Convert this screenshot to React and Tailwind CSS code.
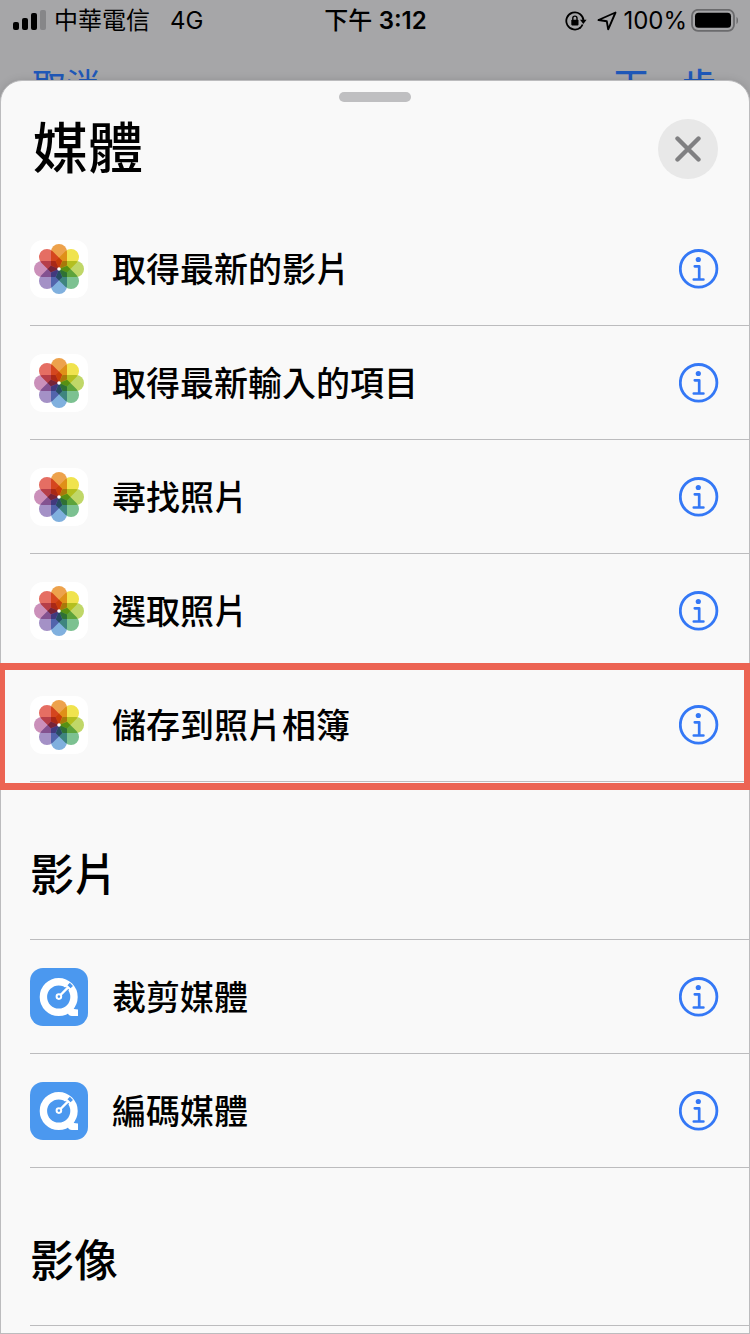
// ActionPicker.jsx
const photoActions = [
  { id: 1, label: "取得最新的影片" },
  { id: 2, label: "取得最新輸入的項目" },
  { id: 3, label: "尋找照片" },
  { id: 4, label: "選取照片" },
  { id: 5, label: "儲存到照片相簿", highlighted: true },
];

const videoActions = [
  { id: 6, label: "裁剪媒體" },
  { id: 7, label: "編碼媒體" },
];

const petals = [
  { angle: 0, color: "#eda24c" },
  { angle: 45, color: "#f0e34e" },
  { angle: 90, color: "#c0d768" },
  { angle: 135, color: "#7cc191" },
  { angle: 180, color: "#80b0de" },
  { angle: 225, color: "#a491c6" },
  { angle: 270, color: "#cb90ba" },
  { angle: 315, color: "#e56e63" },
];

function PhotosIcon() {
  return (
    <svg viewBox="0 0 58 58" className="size-[58px] shrink-0 isolate" aria-hidden="true">
      <rect width="58" height="58" rx="13" fill="#fff" />
      {petals.map((p) => (
        <path
          key={p.angle}
          d="M21 25.500V12a8 8 0 0 1 16 0V25.500L29 29z"
          fill={p.color}
          transform={`rotate(${p.angle} 29 29)`}
          className="mix-blend-multiply"
        />
      ))}
      <circle cx="29" cy="29" r="1.800" fill="#fff" />
    </svg>
  );
}

function QuickTimeIcon() {
  return (
    <svg viewBox="0 0 58 58" className="size-[58px] shrink-0" aria-hidden="true">
      <rect width="58" height="58" rx="13" fill="#4b98ef" />
      <circle cx="28.700" cy="29" r="15.300" fill="none" stroke="#fff" strokeWidth="7.400" />
      <path d="M33 42l9-5 .5 2c.7 1.800 2 2.500 5.500 2.500V48h-6c-2.500 0-3.300-.8-4.200-3z" fill="#fff" />
      <path d="M35.300 22.500L37.600 20.200M39 18.800L41.400 16.400" stroke="#4b98ef" strokeWidth="4.400" />
      <path d="M30.500 27L38.600 18.900" stroke="#fff" strokeWidth="2.400" />
      <circle cx="28.900" cy="28.600" r="2.300" fill="none" stroke="#fff" strokeWidth="2" />
    </svg>
  );
}

function InfoIcon() {
  return (
    <svg viewBox="0 0 40 40" className="size-10" fill="none" stroke="#3478f6" aria-hidden="true">
      <circle cx="19.600" cy="19.800" r="18.300" strokeWidth="2.800" />
      <circle cx="19.300" cy="10.500" r="2.600" fill="#3478f6" stroke="none" />
      <path d="M15.800 17.300h4.400v13M14.800 30.500h9.600" strokeWidth="2.700" strokeLinecap="round" strokeLinejoin="round" />
    </svg>
  );
}

function StatusBar() {
  return (
    <div className="grid grid-cols-[1fr_auto_1fr] items-center h-10 pl-3 pr-[11px] pt-0.5 text-2xl">
      <div className="flex items-center">
        <svg viewBox="0 0 34 22" className="w-[34px] h-[22px]" aria-hidden="true">
          <rect x="1" y="12" width="6" height="8" rx="2" />
          <rect x="10" y="8" width="6" height="12" rx="2" />
          <rect x="19" y="3" width="6" height="17" rx="2" />
          <rect x="28" y="0" width="6" height="20" rx="2" fill="#868688" />
        </svg>
        <span className="ml-2">中華電信</span>
        <span className="ml-5">4G</span>
      </div>
      <div className="font-medium">
        下午 <span className="font-semibold">3:12</span>
      </div>
      <div className="flex items-center justify-end">
        <svg viewBox="0 0 22 20" className="w-[22px] h-5 mr-2.5" fill="none" stroke="#000" aria-hidden="true">
          <path d="M15.700 16.300A8.600 8.600 0 1 1 18.500 9.500" strokeWidth="1.800" />
          <path d="M14.300 17.400A8.600 8.600 0 0 0 17.600 13.500" strokeWidth="1.800" />
          <path d="M15 8.700h6.600l-3.300 4.300z" fill="#000" stroke="none" />
          <rect x="6.300" y="8.800" width="7.200" height="5.600" rx="0.800" fill="#000" stroke="none" />
          <path d="M7.800 9V7.200a2.100 2.100 0 0 1 4.200 0V9" strokeWidth="1.400" />
        </svg>
        <svg viewBox="0 0 20 20" className="size-5 mr-1.5" fill="none" stroke="#000" strokeWidth="1.900" strokeLinejoin="round" aria-hidden="true">
          <path d="M18.500 1.500L1.500 9L9.800 10.300L11.200 18.300z" />
        </svg>
        <span>100%</span>
        <svg viewBox="0 0 48 24" className="w-12 h-6 ml-1" aria-hidden="true">
          <rect x="1" y="0.800" width="42" height="21" rx="6" fill="none" stroke="#6b6b6d" strokeWidth="1.800" />
          <rect x="4" y="3.800" width="36" height="15" rx="3.500" />
          <path d="M45.500 8c2 .8 2 6.200 0 7z" fill="#6b6b6d" />
        </svg>
      </div>
    </div>
  );
}

function ActionRow({ label, icon, highlighted }) {
  return (
    <li className="relative flex items-center h-[114px] ml-[29px]">
      {icon}
      <div className="flex-1 ml-6 text-[34px] font-medium">{label}</div>
      <button type="button" aria-label={`${label} 資訊`} className="mr-[30px]">
        <InfoIcon />
      </button>
      <div className="absolute inset-x-0 bottom-0 h-px bg-[#bcbcbe]" />
      {highlighted && (
        <div className="absolute z-10 -top-[5px] -bottom-2 -left-[30px] -right-px border-l-[5px] border-r-[6px] border-y-[7px] border-[#ec6453] pointer-events-none" />
      )}
    </li>
  );
}

function SectionHeading({ children }) {
  return (
    <h2 className="flex items-center h-[158px] ml-[29px] pt-7 border-b border-[#bcbcbe] text-[44px] font-medium">
      {children}
    </h2>
  );
}

export default function App() {
  return (
    <div
      lang="zh-Hant"
      className="flex flex-col min-h-screen bg-[#a6a6a8] text-black font-[Inter,'Noto_Sans_CJK_TC',sans-serif]"
    >
      <StatusBar />

      {/* navigation bar, its lower half sits behind the sheet */}
      <div className="flex justify-between h-[72px] pl-8 pr-[34px] pt-[18px] -mb-8 text-[34px] text-[#1f58b8]">
        <button type="button">取消</button>
        <button type="button" className="font-medium">下一步</button>
      </div>

      <main className="relative flex-1 rounded-t-[22px] border border-[#bcbcbe] bg-[#f9f9f9] shadow-[0_0_8px_rgba(0,0,0,0.12)]">
        <div className="absolute top-[11px] left-1/2 -translate-x-1/2 w-[72px] h-[10px] rounded-full bg-[#bfbfc1]" />
        <header className="flex items-center justify-between h-[131px] pl-8 pr-[31px] pt-1">
          <h1 className="text-[55px] font-medium">媒體</h1>
          <button type="button" aria-label="關閉" className="flex items-center justify-center size-[60px] rounded-full bg-[#e8e8e8]">
            <svg viewBox="0 0 26 26" className="size-[26px]" stroke="#808082" strokeWidth="4.400" strokeLinecap="round" aria-hidden="true">
              <path d="M2.500 2.500l21 21M23.500 2.500l-21 21" />
            </svg>
          </button>
        </header>

        <ul>
          {photoActions.map((a) => (
            <ActionRow key={a.id} label={a.label} icon={<PhotosIcon />} highlighted={a.highlighted} />
          ))}
        </ul>

        <SectionHeading>影片</SectionHeading>
        <ul>
          {videoActions.map((a) => (
            <ActionRow key={a.id} label={a.label} icon={<QuickTimeIcon />} />
          ))}
        </ul>

        <SectionHeading>影像</SectionHeading>
      </main>
    </div>
  );
}
